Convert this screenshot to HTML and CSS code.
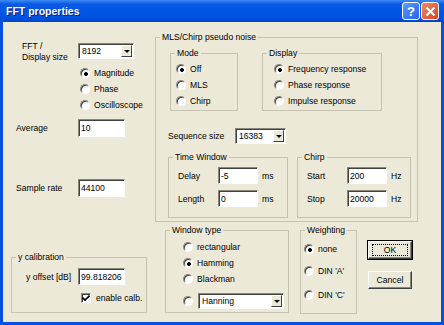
FILE: index.html
```html
<!DOCTYPE html>
<html lang="en">
<head>
    <meta charset="UTF-8">
    <title>FFT properties</title>
    <link rel="stylesheet" href="styles.css">
</head>
<body>
    <div class="window">
        <div class="titlebar">
            <span class="title">FFT properties</span>
            <span class="tb-btn help">?</span>
            <span class="tb-btn close">
                <svg width="11" height="11" viewBox="0 0 11 11"><path d="M1.5 1.5 L9.5 9.5 M9.5 1.5 L1.5 9.5" stroke="#fff" stroke-width="2" fill="none"/></svg>
            </span>
        </div>
        <div class="client">
            <div class="col-left">
                <div class="fft-row">
                    <div class="fft-label">FFT /<br>Display size</div>
                    <div class="combo fft-combo"><span class="combo-text">8192</span><span class="combo-btn"></span></div>
                </div>
                <div class="radios">
                    <label class="opt"><span class="rb on"></span>Magnitude</label>
                    <label class="opt"><span class="rb"></span>Phase</label>
                    <label class="opt"><span class="rb"></span>Oscilloscope</label>
                </div>
                <div class="field-row avg-row">
                    <span class="field-label">Average</span>
                    <input class="edit" type="text" value="10">
                </div>
                <div class="field-row rate-row">
                    <span class="field-label">Sample rate</span>
                    <input class="edit" type="text" value="44100">
                </div>
                <div class="group ycal">
                    <div class="legend">y calibration</div>
                    <div class="gbody">
                        <div class="ycal-row">
                            <span class="ycal-label">y offset [dB]</span>
                            <input class="edit" type="text" value="99.818206">
                        </div>
                        <label class="opt check-row"><span class="cb"><svg width="8" height="8" viewBox="0 0 8 8"><path d="M0.5 3.5 L3 6 L7.5 1.5" stroke="#000" stroke-width="1.6" fill="none"/></svg></span>enable calb.</label>
                    </div>
                </div>
            </div>

            <div class="col-right">
                <div class="group mls">
                    <div class="legend">MLS/Chirp pseudo noise</div>
                    <div class="mls-top">
                        <div class="group mode">
                            <div class="legend">Mode</div>
                            <div class="gbody">
                                <label class="opt"><span class="rb on"></span>Off</label>
                                <label class="opt"><span class="rb"></span>MLS</label>
                                <label class="opt"><span class="rb"></span>Chirp</label>
                            </div>
                        </div>
                        <div class="group display">
                            <div class="legend">Display</div>
                            <div class="gbody">
                                <label class="opt"><span class="rb on"></span>Frequency response</label>
                                <label class="opt"><span class="rb"></span>Phase response</label>
                                <label class="opt"><span class="rb"></span>Impulse response</label>
                            </div>
                        </div>
                    </div>
                    <div class="seq-row">
                        <span class="seq-label">Sequence size</span>
                        <div class="combo seq-combo"><span class="combo-text">16383</span><span class="combo-btn"></span></div>
                    </div>
                    <div class="mls-bottom">
                        <div class="group timewin">
                            <div class="legend">Time Window</div>
                            <div class="gbody">
                                <div class="unit-row">
                                    <span class="unit-label">Delay</span>
                                    <input class="edit" type="text" value="-5">
                                    <span class="unit">ms</span>
                                </div>
                                <div class="unit-row">
                                    <span class="unit-label">Length</span>
                                    <input class="edit" type="text" value="0">
                                    <span class="unit">ms</span>
                                </div>
                            </div>
                        </div>
                        <div class="group chirp">
                            <div class="legend">Chirp</div>
                            <div class="gbody">
                                <div class="unit-row">
                                    <span class="unit-label">Start</span>
                                    <input class="edit" type="text" value="200">
                                    <span class="unit">Hz</span>
                                </div>
                                <div class="unit-row">
                                    <span class="unit-label">Stop</span>
                                    <input class="edit" type="text" value="20000">
                                    <span class="unit">Hz</span>
                                </div>
                            </div>
                        </div>
                    </div>
                </div>

                <div class="bottom-row">
                    <div class="group wintype">
                        <div class="legend">Window type</div>
                        <div class="gbody">
                            <label class="opt"><span class="rb"></span>rectangular</label>
                            <label class="opt"><span class="rb on"></span>Hamming</label>
                            <label class="opt"><span class="rb"></span>Blackman</label>
                            <div class="opt combo-opt">
                                <span class="rb"></span>
                                <div class="combo win-combo"><span class="combo-text">Hanning</span><span class="combo-btn"></span></div>
                            </div>
                        </div>
                    </div>
                    <div class="group weighting">
                        <div class="legend">Weighting</div>
                        <div class="gbody">
                            <label class="opt"><span class="rb on"></span>none</label>
                            <label class="opt"><span class="rb"></span>DIN 'A'</label>
                            <label class="opt"><span class="rb"></span>DIN 'C'</label>
                        </div>
                    </div>
                    <div class="buttons">
                        <button class="btn default"><span class="focus">OK</span></button>
                        <button class="btn">Cancel</button>
                    </div>
                </div>
            </div>
        </div>
    </div>
</body>
</html>
```
FILE: styles.css
```css
body {
    margin: 0;
    font-family: 'Liberation Sans', Arial, sans-serif;
    font-size: 8.6px;
    color: #000;
}
.window {
    width: 444px;
    height: 325px;
    box-sizing: border-box;
    background: #0550e0;
    display: flex;
    flex-direction: column;
}
.titlebar {
    height: 22px;
    display: flex;
    align-items: center;
    background: linear-gradient(to bottom, #3d8cf5 0%, #0a5ae6 18%, #0055e5 50%, #0052e0 80%, #0044c8 100%);
    padding: 0 6px;
}
.title {
    color: #fff;
    font-weight: bold;
    font-size: 10.5px;
    flex: 1;
    text-shadow: 1px 1px 0 #0a1e8c;
}
.tb-btn {
    width: 16px;
    height: 16px;
    border: 1px solid #fff;
    border-radius: 3px;
    display: flex;
    align-items: center;
    justify-content: center;
    color: #fff;
    font-weight: bold;
    font-size: 13px;
}
.help {
    background: linear-gradient(135deg, #5d9bff, #2462e8);
    margin-right: 1px;
}
.close {
    background: linear-gradient(135deg, #f08a66, #d8431f);
    margin-right: -1px;
}
.client {
    flex: 1;
    margin: 0 3px 3px 3px;
    background: #ece9d8;
    display: flex;
    padding-left: 8px;
}

/* generic controls */
.group {
    border: 1px solid #c5c2b2;
    box-sizing: border-box;
}
.legend {
    width: fit-content;
    margin: -6px 0 -5px 4px;
    padding: 0 2px;
    line-height: 11px;
    background: #ece9d8;
}
.opt {
    display: flex;
    align-items: center;
    height: 16px;
    white-space: nowrap;
}
.rb {
    width: 10px;
    height: 10px;
    box-sizing: border-box;
    border-radius: 50%;
    border: 1px solid;
    border-color: #8a877a #fff #fff #8a877a;
    box-shadow: inset 1px 1px 0 #404040;
    background: #fff;
    margin-right: 4px;
    flex: none;
}
.rb.on {
    background: radial-gradient(circle at 5px 5px, #000 0, #000 1.6px, #fff 2.2px);
}
.cb {
    width: 10px;
    height: 10px;
    box-sizing: border-box;
    border: 1px solid;
    border-color: #8a877a #fff #fff #8a877a;
    box-shadow: inset 1px 1px 0 #404040;
    background: #fff;
    margin-right: 5px;
    display: flex;
    align-items: center;
    justify-content: center;
}
.edit {
    box-sizing: border-box;
    height: 18px;
    margin: 0;
    padding: 0 0 0 2px;
    font: inherit;
    color: #000;
    background: #fff;
    border: 1px solid;
    border-color: #8a877a #fff #fff #8a877a;
    box-shadow: inset 1px 1px 0 #404040;
    outline: none;
}
.combo {
    box-sizing: border-box;
    height: 16px;
    display: flex;
    background: #fff;
    border: 1px solid;
    border-color: #8a877a #fff #fff #8a877a;
    box-shadow: inset 1px 1px 0 #404040;
}
.combo-text {
    flex: 1;
    padding: 1px 0 0 3px;
    line-height: 13px;
}
.combo-btn {
    width: 11px;
    margin: 1px 1px 1px 0;
    box-sizing: border-box;
    background: #ece9d8;
    border: 1px solid;
    border-color: #fff #404040 #404040 #fff;
    display: flex;
    align-items: center;
    justify-content: center;
}
.combo-btn::after {
    content: "";
    border-left: 3px solid transparent;
    border-right: 3px solid transparent;
    border-top: 3px solid #000;
}

/* left column */
.col-left {
    width: 136px;
    display: flex;
    flex-direction: column;
}
.fft-row {
    display: flex;
    margin-top: 19px;
    height: 24px;
}
.fft-label {
    width: 56px;
    padding-left: 11px;
    line-height: 11px;
}
.fft-combo {
    width: 56px;
    margin-top: 2px;
}
.radios {
    margin-left: 69px;
}
.field-row {
    display: flex;
    align-items: center;
}
.field-label {
    width: 62px;
    padding-left: 5px;
}
.field-row .edit {
    width: 47px;
}
.avg-row {
    margin-top: 6px;
}
.rate-row {
    margin-top: 42px;
}
.ycal {
    margin-top: 60px;
    height: 56px;
}
.ycal-row {
    display: flex;
    align-items: center;
    margin-top: 10px;
}
.ycal-label {
    width: 52px;
    padding-left: 14px;
}
.ycal-row .edit {
    width: 47px;
    height: 17px;
}
.check-row {
    margin: 6px 0 0 69px;
    height: 14px;
}

/* right column */
.col-right {
    margin-left: 8px;
    width: 263px;
}
.mls {
    margin-top: 15px;
    height: 185px;
}
.mls-top {
    display: flex;
    margin: 15px 0 0 14px;
}
.mode {
    width: 68px;
    height: 58px;
}
.mode .gbody {
    padding: 7px 0 0 5px;
}
.display {
    width: 120px;
    height: 58px;
    margin-left: 24px;
}
.display .gbody {
    padding: 7px 0 0 11px;
}
.seq-row {
    display: flex;
    align-items: center;
    margin: 17px 0 0 12px;
}
.seq-label {
    width: 67px;
}
.seq-combo {
    width: 51px;
}
.mls-bottom {
    display: flex;
    margin: 13px 0 0 12px;
}
.timewin {
    width: 120px;
    height: 61px;
}
.chirp {
    width: 114px;
    height: 61px;
    margin-left: 9px;
}
.timewin .gbody,
.chirp .gbody {
    padding: 9px 0 0 9px;
}
.unit-row {
    display: flex;
    align-items: center;
    height: 17px;
    margin-bottom: 6px;
}
.unit-label {
    width: 40px;
}
.unit-row .edit {
    width: 40px;
    height: 17px;
}
.unit {
    margin-left: 4px;
}
.bottom-row {
    display: flex;
    margin-top: 8px;
}
.wintype {
    width: 124px;
    height: 83px;
    margin-left: 10px;
}
.wintype .gbody {
    padding: 8px 0 0 17px;
}
.combo-opt {
    margin-top: 6px;
}
.win-combo {
    width: 86px;
    margin-left: 1px;
}
.weighting {
    width: 57px;
    height: 84px;
    margin-left: 11px;
}
.weighting .gbody {
    padding: 10px 0 0 3px;
}
.weighting .opt + .opt {
    margin-top: 6px;
}
.weighting .opt:last-child {
    margin-top: 8px;
}
.buttons {
    margin: 11px 0 0 11px;
    display: flex;
    flex-direction: column;
}
.btn {
    width: 44px;
    height: 18px;
    padding: 0;
    font: inherit;
    color: #000;
    background: #ece9d8;
    border: 1px solid;
    border-color: #fff #404040 #404040 #fff;
    box-shadow: inset -1px -1px 0 #8a877a;
}
.btn + .btn {
    margin-top: 12px;
}
.btn.default {
    outline: 1px solid #000;
}
.focus {
    display: block;
    margin: 0 3px;
    border: 1px dotted #000;
    line-height: 10px;
}
```
